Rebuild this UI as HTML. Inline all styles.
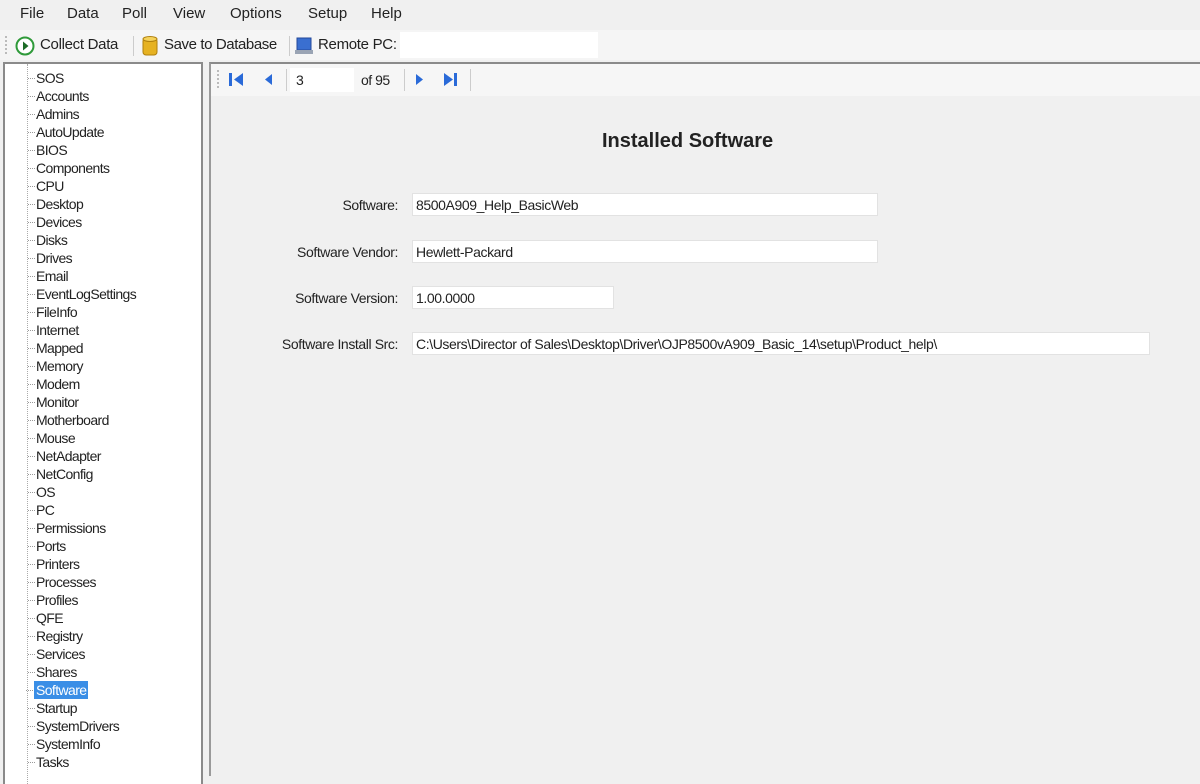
<!DOCTYPE html>
<html><head><style>
body{margin:0;width:1200px;height:774px;overflow:hidden;background:#f0f0f0;font-family:"Liberation Sans",sans-serif;font-size:14px;color:#222;position:relative}
.a{position:absolute;white-space:nowrap}
.menu span{position:absolute;top:5px;font-size:15px}
.tree{position:absolute;left:3px;top:62px;width:196px;height:720px;background:#fff;border:2px solid #8a8a8a;border-bottom:none}
.tree div.t{position:absolute;left:31px;font-size:14px;letter-spacing:-0.6px;height:18px;line-height:18px}
.tree div.t:before{content:"";position:absolute;left:-8px;top:9px;width:7px;border-top:1px dotted #999}
.tree div.vline{position:absolute;left:22px;top:0;height:720px;border-left:1px dotted #aaa}
.right{position:absolute;left:209px;top:62px;width:991px;height:712px;border-left:2px solid #9a9a9a;border-top:2px solid #8a8a8a;background:#f0f0f0}
.lbl{position:absolute;text-align:right;right:802px;font-size:14px;letter-spacing:-0.4px}
.inp{position:absolute;left:412px;height:23px;background:#fff;border:1px solid #e2e2e2;box-sizing:border-box;padding-left:3px;line-height:22px;font-size:14px;letter-spacing:-0.4px}
</style></head><body>
<div class="menu"><span style="left:20px">File</span><span style="left:67px">Data</span><span style="left:122px">Poll</span><span style="left:173px">View</span><span style="left:230px">Options</span><span style="left:308px">Setup</span><span style="left:371px">Help</span></div>
<div class="a" style="left:0;top:30px;width:1200px;height:30px;background:#f5f5f5"></div>
<div class="a" style="left:400px;top:32px;width:198px;height:26px;background:#fff"></div>
<div class="a" style="left:5px;top:36px;height:18px;border-left:2px dotted #bbb"></div>
<svg class="a" style="left:14px;top:35px" width="22" height="22"><circle cx="11" cy="11" r="8.5" fill="#fff" stroke="#2f9a3a" stroke-width="2"/><path d="M9 6.5 L14.5 11 L9 15.5Z" fill="#1c6b26"/></svg>
<div class="a" style="left:40px;top:36px;font-size:15px;letter-spacing:-0.3px">Collect Data</div>
<div class="a" style="left:133px;top:36px;height:20px;border-left:1px solid #ccc"></div>
<svg class="a" style="left:140px;top:34px" width="20" height="24"><rect x="3" y="4" width="14" height="17" rx="3" fill="#e6b222" stroke="#b0800d"/><ellipse cx="10" cy="5" rx="7" ry="2.5" fill="#f5d25a" stroke="#b0800d"/></svg>
<div class="a" style="left:164px;top:36px;font-size:15px;letter-spacing:-0.4px">Save to Database</div>
<div class="a" style="left:289px;top:36px;height:20px;border-left:1px solid #ccc"></div>
<svg class="a" style="left:294px;top:36px" width="20" height="20"><rect x="3" y="2" width="14" height="12" fill="#3a6fd0" stroke="#24489a"/><rect x="1" y="14" width="18" height="4" fill="#9aa4b4"/></svg>
<div class="a" style="left:318px;top:36px;font-size:15px;letter-spacing:-0.3px">Remote PC:</div>
<div class="tree"><div class="vline"></div>
<div class="t" style="top:5px">SOS</div><div class="t" style="top:23px">Accounts</div><div class="t" style="top:41px">Admins</div><div class="t" style="top:59px">AutoUpdate</div><div class="t" style="top:77px">BIOS</div><div class="t" style="top:95px">Components</div><div class="t" style="top:113px">CPU</div><div class="t" style="top:131px">Desktop</div><div class="t" style="top:149px">Devices</div><div class="t" style="top:167px">Disks</div><div class="t" style="top:185px">Drives</div><div class="t" style="top:203px">Email</div><div class="t" style="top:221px">EventLogSettings</div><div class="t" style="top:239px">FileInfo</div><div class="t" style="top:257px">Internet</div><div class="t" style="top:275px">Mapped</div><div class="t" style="top:293px">Memory</div><div class="t" style="top:311px">Modem</div><div class="t" style="top:329px">Monitor</div><div class="t" style="top:347px">Motherboard</div><div class="t" style="top:365px">Mouse</div><div class="t" style="top:383px">NetAdapter</div><div class="t" style="top:401px">NetConfig</div><div class="t" style="top:419px">OS</div><div class="t" style="top:437px">PC</div><div class="t" style="top:455px">Permissions</div><div class="t" style="top:473px">Ports</div><div class="t" style="top:491px">Printers</div><div class="t" style="top:509px">Processes</div><div class="t" style="top:527px">Profiles</div><div class="t" style="top:545px">QFE</div><div class="t" style="top:563px">Registry</div><div class="t" style="top:581px">Services</div><div class="t" style="top:599px">Shares</div><div class="t" style="top:617px;background:#3a8ee6;color:#fff;padding:0 2px;margin-left:-2px">Software</div><div class="t" style="top:635px">Startup</div><div class="t" style="top:653px">SystemDrivers</div><div class="t" style="top:671px">SystemInfo</div><div class="t" style="top:689px">Tasks</div>
</div>
<div class="right"></div>
<div class="a" style="left:211px;top:64px;width:989px;height:32px;background:#f6f6f6"></div>
<div class="a" style="left:217px;top:70px;height:18px;border-left:2px dotted #bbb"></div>
<svg class="a" style="left:228px;top:71px" width="80" height="18"><rect x="1" y="2" width="3" height="13" fill="#2a6ad8"/><path d="M15 2 L6 8.5 L15 15Z" fill="#2a6ad8"/><path d="M44 3 L37 8.5 L44 14Z" fill="#2a6ad8"/></svg>
<div class="a" style="left:286px;top:69px;height:22px;border-left:1px solid #ccc"></div>
<div class="a" style="left:290px;top:68px;width:64px;height:24px;background:#fff"></div>
<div class="a" style="left:296px;top:72px">3</div>
<div class="a" style="left:361px;top:72px;letter-spacing:-0.5px">of 95</div>
<div class="a" style="left:404px;top:69px;height:22px;border-left:1px solid #ccc"></div>
<svg class="a" style="left:412px;top:71px" width="50" height="18"><path d="M4 3 L11 8.5 L4 14Z" fill="#2a6ad8"/><path d="M32 2 L41 8.5 L32 15Z" fill="#2a6ad8"/><rect x="42" y="2" width="3" height="13" fill="#2a6ad8"/></svg>
<div class="a" style="left:470px;top:69px;height:22px;border-left:1px solid #ccc"></div>
<div class="a" style="left:602px;top:130px;font-size:20px;font-weight:bold">Installed Software</div>
<div class="lbl" style="top:197px">Software:</div>
<div class="lbl" style="top:244px">Software Vendor:</div>
<div class="lbl" style="top:290px">Software Version:</div>
<div class="lbl" style="top:336px">Software Install Src:</div>
<div class="inp" style="top:193px;width:466px">8500A909_Help_BasicWeb</div>
<div class="inp" style="top:240px;width:466px">Hewlett-Packard</div>
<div class="inp" style="top:286px;width:202px">1.00.0000</div>
<div class="inp" style="top:332px;width:738px">C:\Users\Director of Sales\Desktop\Driver\OJP8500vA909_Basic_14\setup\Product_help\</div>
</body></html>
